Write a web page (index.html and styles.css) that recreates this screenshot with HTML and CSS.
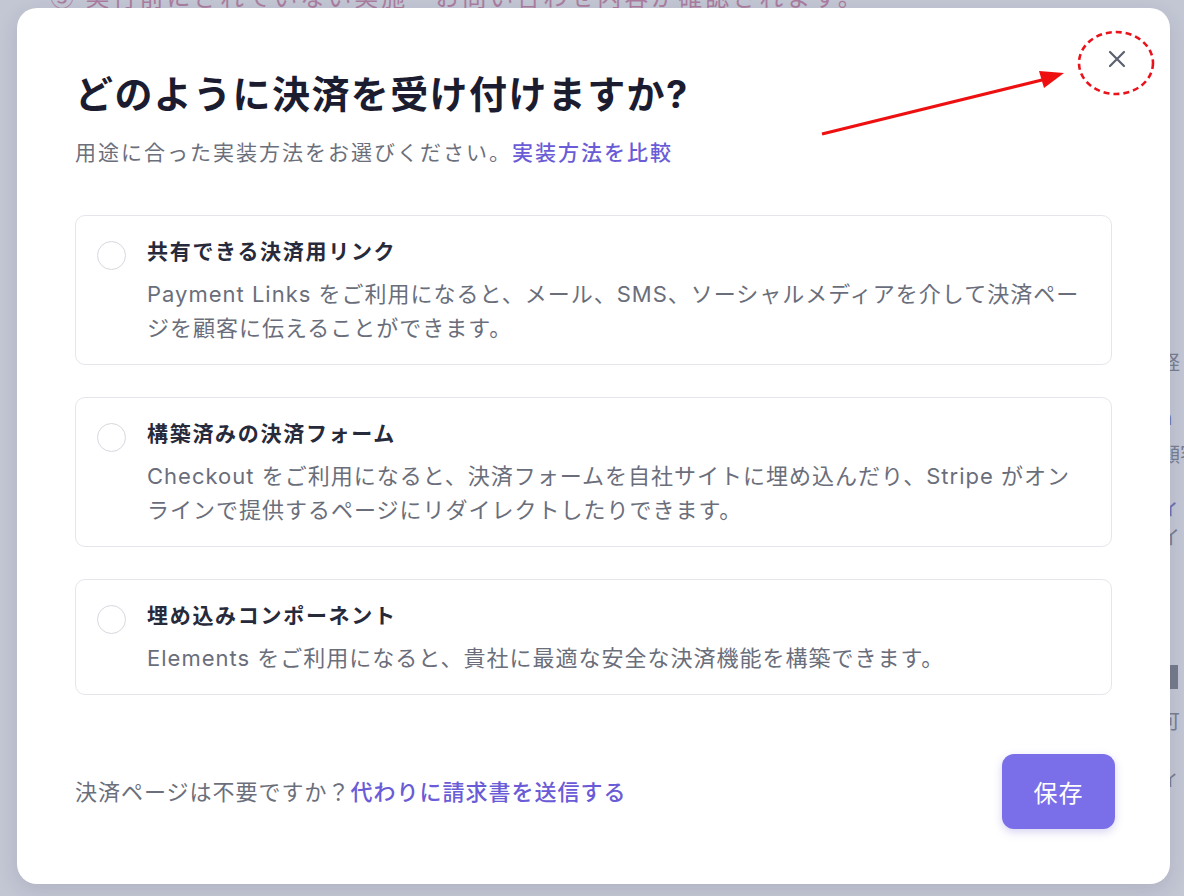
FILE: index.html
```html
<!DOCTYPE html>
<html lang="ja">
<head>
<meta charset="utf-8">
<title>決済方法の選択</title>
<link rel="stylesheet" href="styles.css">
</head>
<body>
<div class="page">
  <div class="page-top">③ 実行前にされていない実施・お問い合わせ内容が確認されます。</div>
  <div class="page-side">
    <div class="side-item s1">経</div>
    <div class="side-item s2 link">n</div>
    <div class="side-item s3">顧客</div>
    <div class="side-item s4 link">ィ</div>
    <div class="side-item s5">イ</div>
    <div class="side-block"></div>
    <div class="side-item s6">可</div>
    <div class="side-item s7">ィ</div>
  </div>
</div>

<div class="backdrop">
  <div class="modal">
    <button class="close" aria-label="閉じる">
      <svg width="20" height="20" viewBox="0 0 20 20"><path d="M3 3 L17 17 M17 3 L3 17" stroke="#5c6170" stroke-width="2.2" stroke-linecap="round" fill="none"/></svg>
    </button>
    <h1 class="title">どのように決済を受け付けますか?</h1>
    <p class="subtitle">用途に合った実装方法をお選びください。<a class="link" href="#">実装方法を比較</a></p>

    <div class="options">
      <label class="option">
        <span class="radio"></span>
        <span class="option-body">
          <span class="option-title">共有できる決済用リンク</span>
          <span class="option-desc">Payment Links をご利用になると、メール、SMS、ソーシャルメディアを介して決済ページを顧客に伝えることができます。</span>
        </span>
      </label>
      <label class="option">
        <span class="radio"></span>
        <span class="option-body">
          <span class="option-title">構築済みの決済フォーム</span>
          <span class="option-desc">Checkout をご利用になると、決済フォームを自社サイトに埋め込んだり、Stripe がオンラインで提供するページにリダイレクトしたりできます。</span>
        </span>
      </label>
      <label class="option">
        <span class="radio"></span>
        <span class="option-body">
          <span class="option-title">埋め込みコンポーネント</span>
          <span class="option-desc">Elements をご利用になると、貴社に最適な安全な決済機能を構築できます。</span>
        </span>
      </label>
    </div>

    <div class="footer">
      <p class="footer-text">決済ページは不要ですか？<a class="link" href="#">代わりに請求書を送信する</a></p>
      <button class="save">保存</button>
    </div>
  </div>
</div>

<svg class="annot" width="1184" height="896" viewBox="0 0 1184 896">
  <ellipse cx="1116" cy="63" rx="37" ry="31" fill="none" stroke="#e8131b" stroke-width="2.6" stroke-dasharray="6 4"/>
  <line x1="822" y1="134" x2="1046" y2="79" stroke="#ee1010" stroke-width="3.2"/>
  <polygon points="1064,73 1039,71 1044,88" fill="#ee1010"/>
</svg>
</body>
</html>
```

FILE: styles.css
```css
* { box-sizing: border-box; }
html, body { margin: 0; padding: 0; }
body {
  width: 1184px;
  height: 896px;
  overflow: hidden;
  background: #ffffff;
  font-family: Inter, "Noto Sans CJK JP", sans-serif;
  position: relative;
}

.page {
  height: 896px;
  display: flex;
  flex-direction: column;
}
.page-top {
  margin-top: -16px;
  padding-left: 50px;
  font-size: 24px;
  line-height: 24px;
  color: #c85a88;
  letter-spacing: 3px;
  white-space: nowrap;
  overflow: hidden;
  font-family: "Noto Sans CJK JP", sans-serif;
}
.page-side {
  margin-left: 1160px;
  width: 24px;
  overflow: hidden;
  padding-top: 342px;
  display: flex;
  flex-direction: column;
  font-family: "Noto Sans CJK JP", sans-serif;
  font-size: 20px;
  line-height: 24px;
  color: #555a68;
  white-space: nowrap;
}
.side-item.link { color: #4a3fc0; }
.s2 { margin-top: 31px; }
.s3 { margin-top: 13px; }
.s4 { margin-top: 29px; }
.s5 { margin-top: 6px; }
.side-block { width: 18px; height: 24px; background: #4f535f; margin: 116px 0 0 0; }
.s6 { margin-top: 20px; }
.s7 { margin-top: 33px; }

.backdrop {
  position: absolute;
  inset: 0;
  background: rgba(148, 154, 176, 0.56);
  padding: 8px 14px 12px 17px;
  display: flex;
}
.modal {
  position: relative;
  flex: 1;
  background: #ffffff;
  border-radius: 20px;
  padding: 64px 58px 55px 58px;
  display: flex;
  flex-direction: column;
  box-shadow: 0 6px 20px rgba(40, 45, 70, 0.12);
}

.close {
  position: absolute;
  top: 41px;
  right: 43px;
  width: 20px;
  height: 20px;
  padding: 0;
  border: 0;
  background: none;
  display: flex;
}

.title {
  margin: 0;
  font-size: 38px;
  line-height: 44px;
  font-weight: 700;
  color: #1b1c30;
  letter-spacing: 1.4px;
}
.subtitle {
  margin: 22px 0 0;
  font-size: 21px;
  line-height: 30px;
  color: #6b6f7c;
  letter-spacing: 2px;
}
.link {
  color: #6a5bd6;
  text-decoration: none;
  font-weight: 500;
}

.options {
  margin-top: 47px;
  display: flex;
  flex-direction: column;
  gap: 32px;
}
.option {
  display: flex;
  gap: 21px;
  border: 1.5px solid #e4e6eb;
  border-radius: 10px;
  padding: 19px 30px 19px 21px;
}
.radio {
  flex: none;
  width: 29px;
  height: 29px;
  margin-top: 6px;
  border: 1.5px solid #d6d8df;
  border-radius: 50%;
}
.option-body {
  display: flex;
  flex-direction: column;
  gap: 8px;
}
.option-title {
  font-size: 21px;
  line-height: 34px;
  font-weight: 700;
  color: #272a3b;
  letter-spacing: 1.7px;
}
.option-desc {
  font-size: 22px;
  line-height: 34px;
  color: #6a6e7b;
  letter-spacing: 1px;
}

.footer {
  margin-top: auto;
  margin-right: -3px;
  display: flex;
  align-items: center;
  justify-content: space-between;
}
.footer-text {
  margin: 0;
  font-size: 22px;
  line-height: 32px;
  color: #6b6f7c;
  letter-spacing: 1px;
}
.save {
  width: 113px;
  height: 75px;
  border: 0;
  border-radius: 12px;
  background: #7a6fe9;
  color: #ffffff;
  font-family: "Noto Sans CJK JP", sans-serif;
  font-size: 24px;
  letter-spacing: 1px;
  box-shadow: 0 3px 8px rgba(90, 80, 200, 0.25);
}

.annot {
  position: absolute;
  left: 0;
  top: 0;
  pointer-events: none;
}
```
